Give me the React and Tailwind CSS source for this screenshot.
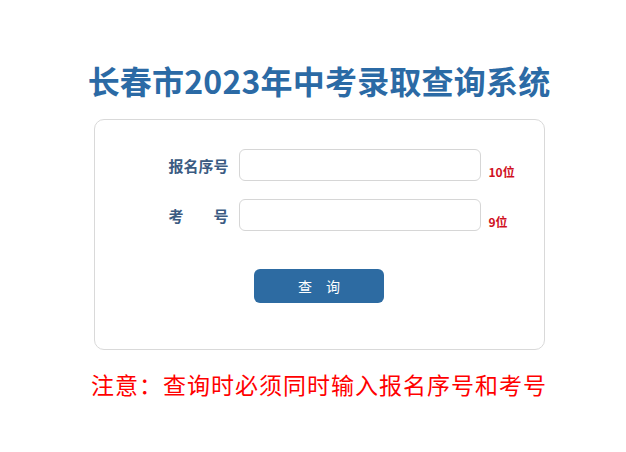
import React from 'react';

const FONT = "font-['Noto_Sans_CJK_SC','Noto_Sans',sans-serif]";

function Field({ label, hint, spaced }) {
  return (
    <div className="flex items-center">
      <div className="w-[60px] text-[15px] font-bold text-[#3b5b82] leading-none">
        {spaced ? (
          <span className="flex justify-between"><span>考</span><span>号</span></span>
        ) : (
          <span>{label}</span>
        )}
      </div>
      <input
        className="ml-[10px] w-[242px] h-[32px] rounded-[6px] border border-[#d6d6d6] bg-white px-2 text-[14px] outline-none"
        type="text"
      />
      <span className="self-end ml-[8px] mb-[1px] text-[12px] font-bold text-[#d0101e] leading-[16px]">{hint}</span>
    </div>
  );
}

export default function App() {
  return (
    <div className={`${FONT} w-[626px] h-[452px] bg-white flex flex-col items-center pt-[60px] pl-[12px]`}>
      <h1 className="text-[32px] font-bold text-[#2b6aa5] leading-[40px] tracking-[0.2px]">
        长春市2023年中考录取查询系统
      </h1>

      <div className="mt-[19px] w-[451px] h-[231px] rounded-[10px] border border-[#d9d9d9] flex flex-col pt-[29px]">
        <div className="flex flex-col gap-[18px] pl-[74px]">
          <Field label="报名序号" hint="10位" />
          <Field spaced hint="9位" />
        </div>
        <button className="mt-[38px] self-center w-[130px] h-[34px] rounded-[6px] bg-[#2d6ba2] text-white text-[14px] tracking-[14px] pl-[14px]">
          查询
        </button>
      </div>

      <p className="mt-[18px] text-[23px] text-[#ff0000] leading-[32px] tracking-[1px]">
        注意：查询时必须同时输入报名序号和考号
      </p>
    </div>
  );
}
